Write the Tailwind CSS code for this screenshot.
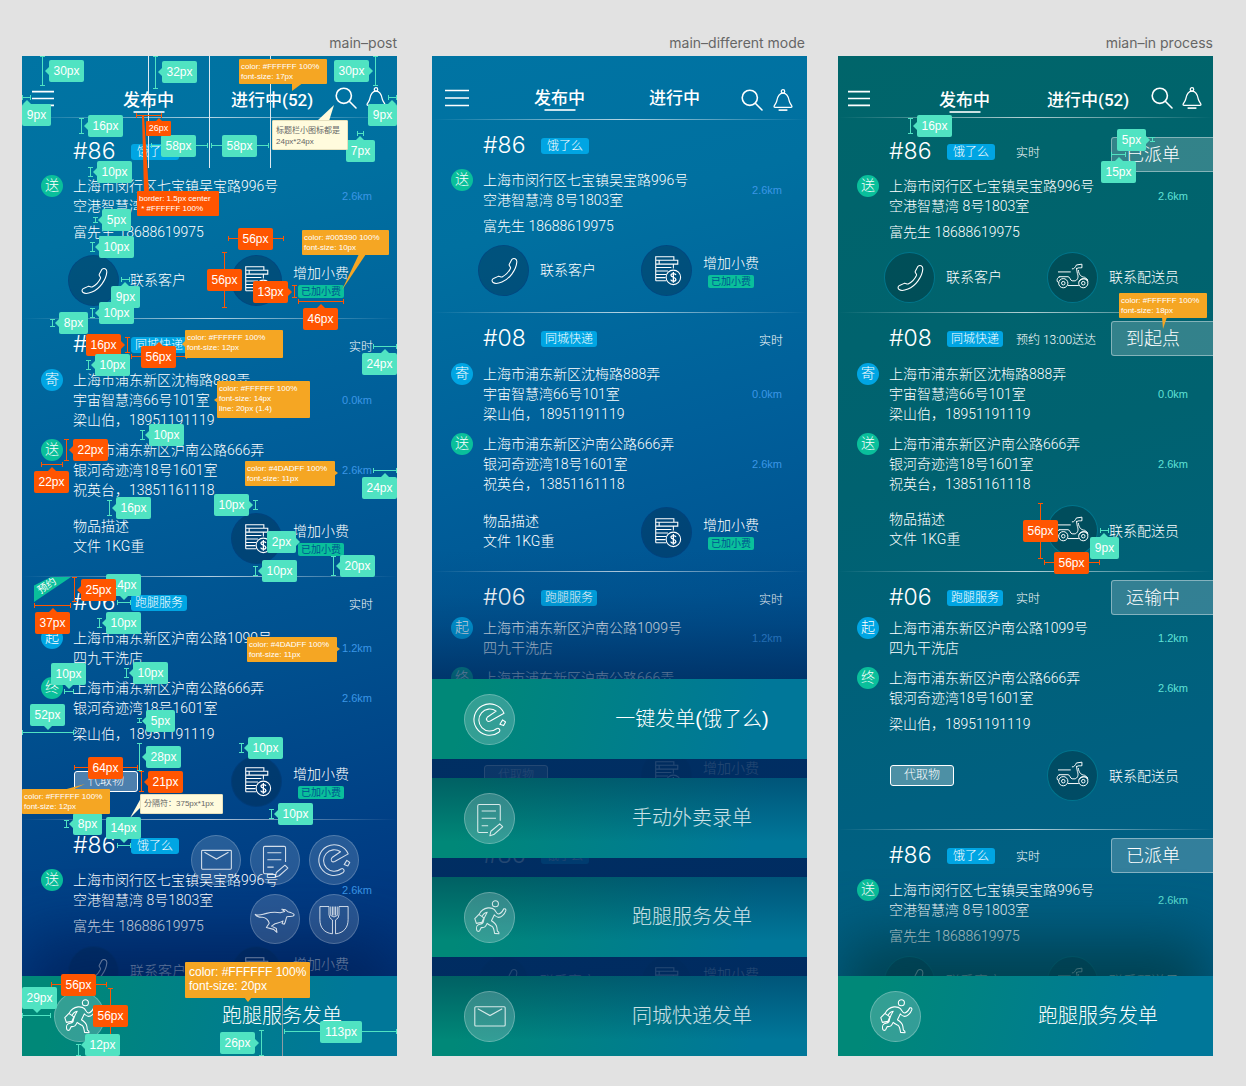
<!DOCTYPE html>
<html lang="zh-CN">
<head>
<meta charset="utf-8">
<meta name="viewport" content="width=device-width, initial-scale=1">
<title>Delivery app boards</title>
<script src="https://cdn.jsdelivr.net/npm/@tailwindcss/browser@4"></script>
</head>
<body class="bg-[#e2e2e2] font-['Liberation_Sans','Noto_Sans_CJK_SC',sans-serif] font-light text-white">

<!-- Shared line icons -->
<svg class="hidden">
  <symbol id="i-menu" viewBox="0 0 24 18"><path d="M0 1.5H24M0 9H24M0 16.5H24" stroke="currentColor" stroke-width="1.7"/></symbol>
  <symbol id="i-search" viewBox="0 0 22 22"><g fill="none" stroke="currentColor" stroke-width="1.6" stroke-linecap="round"><circle cx="8.8" cy="8.8" r="7.6"/><path d="M14.3 14.3L21 21"/></g></symbol>
  <symbol id="i-bell" viewBox="0 0 20 22"><g fill="none" stroke="currentColor" stroke-width="1.3"><circle cx="10" cy="2.4" r="1.7"/><path d="M10 4.1C14.6 4.1 15.6 8 16.3 12.2C16.7 14.4 18.6 16 18.9 17.4Q19 18.4 18 18.4H2Q1 18.4 1.1 17.4C1.4 16 3.3 14.4 3.7 12.2C4.4 8 5.4 4.1 10 4.1Z"/><path d="M5.6 21.1H14.4" stroke-width="1.6"/></g></symbol>
  <symbol id="i-phone" viewBox="0 0 50 50"><path fill="none" stroke="currentColor" stroke-width="1.1" stroke-linejoin="round" d="M33.6 13.6C35.5 11.8 38.8 12.8 38.6 16.2C38 24.4 31.2 33.6 23.4 36.8C19.6 38.3 16.2 38.6 14.4 37.3C12.8 36 13 33.8 14.8 33.1L19.6 31C21.4 30.4 22 32 23.6 31.6C27 30 30.4 26.4 32.2 22.6C32.5 21 30.4 20.6 30.8 18.8Z"/></symbol>
  <symbol id="i-coins" viewBox="0 0 50 50"><g fill="none" stroke="currentColor" stroke-width="1.1"><path d="M14 11H32.5V14.5H14ZM17.5 14.5H36.5V18.5H17.5ZM14 14.5V35.5M14 18.5H32V23M14 22H30M14 25.5H26.5M14 29H24.5M14 32.3H24M14 35.5H25M14 18.5H18"/><circle cx="32" cy="32" r="7.4"/><path d="M34.6 29.6C34 27.6 29.6 27.6 29.6 29.9C29.6 32.4 34.6 31.4 34.6 34.2C34.6 36.6 29.8 36.5 29.3 34.3M32 26.6V37.4" stroke-width="1.3"/></g></symbol>
  <symbol id="i-scooter" viewBox="0 0 50 50"><g fill="none" stroke="currentColor" stroke-width="1"><circle cx="15.6" cy="30.8" r="4.7"/><circle cx="15.6" cy="30.8" r="1.8"/><circle cx="36" cy="30.8" r="4.7"/><circle cx="36" cy="30.8" r="1.8"/><path d="M10.2 19.3H23.2M11 24.2H20.4C22.6 24.2 22.4 28 24.6 28.4H27.4C30 28 31.6 24.6 30 21L29 15.2M20.4 33.2H31.4M10.8 30.5C8 28.6 9.4 24.6 12 24.4M31 17.4C31.4 22.2 33.6 24.2 37.4 24.8L40.4 27.2C38 25.8 33.6 26 31.8 29.2M24.4 16.2C26.4 16.8 28.2 14 29 12.2L34.6 11.4V15C32.6 15.4 31.2 14.6 29.6 15.8M39.4 26.6L41 29"/></g></symbol>
  <symbol id="i-doc" viewBox="0 0 50 50"><path fill="none" stroke="currentColor" stroke-width="1.1" stroke-linejoin="round" d="M23.4 39.3H14.4Q13 39.3 13 37.8V12.2Q13 10.8 14.4 10.8H34.6Q36 10.8 36 12.2V27.2M17 17.4H31.6M17 24.8H31.6M17 32.4H23.6M25.4 42.6L26.4 38L35.4 30.4L38.4 33.4L29.4 41.4Z"/></symbol>
  <symbol id="i-ele" viewBox="0 0 50 50"><path fill="none" stroke="currentColor" stroke-width="1.1" stroke-linejoin="round" d="M39.8 18.6A16 16 0 1 0 34.6 38Q36.6 35.8 34.4 34.2Q33.4 33.6 32.2 34.4A11.2 11.2 0 1 1 31.8 16.4L23 22.4Q21.2 24.2 22.4 26Q23.6 27.6 25.8 26.6ZM38.4 25.4L41.4 27.6L39.4 31.2L35.6 29.8Z"/></symbol>
  <symbol id="i-run" viewBox="0 0 50 50"><g fill="none" stroke="currentColor" stroke-width="1.1" stroke-linejoin="round"><circle cx="31" cy="11" r="3.1"/><path d="M14.4 21.8C16 18.4 19.4 15.8 23.4 15.2C26 15 28.6 15.4 30 17C31.6 19 32.4 21.4 34 21.5C36 21.4 38.2 18.8 39.6 16.2Q41.9 15.6 41.7 18C40.4 22 36.6 25.2 33.6 24.8C31.6 24.3 30.6 23 30 22.3L27 28.4C29.6 30 32 32 32.5 35L33 38.8Q35.2 40 34.6 41.6L30.2 41.2C29.6 37 29 35 27.5 34C25.5 33 23.7 32.2 22.6 31C21 34.6 20 35.6 16.6 35.3L14.9 38.6Q13 39.9 12 38C11.4 35.8 12 33 13.6 32.4C16 31.6 17 32 18.4 30.2C19 26 20.6 23 22.6 19.7C20 20 18.6 21.6 17.2 24.2M10 26.2L14.2 21.8L19.2 25.4L17.2 30L11.6 31Z"/></g></symbol>
  <symbol id="i-mail" viewBox="0 0 50 50"><g fill="none" stroke="currentColor" stroke-width="1.1"><rect x="10" y="15" width="31" height="19.7" rx="1"/><path d="M13 17L25.5 24L38 17"/></g></symbol>
  <symbol id="i-roo" viewBox="0 0 50 50"><path fill="none" stroke="currentColor" stroke-width="1.1" stroke-linejoin="round" d="M4.4 20.2C9 22 12 20 15 19.4C20 18 26 17.4 30.4 18.6L35 17.2L32 14.8L36 15.4L38.4 17.4C41 18 44.6 19 45 20.8C44.4 23.4 39.6 22 37.4 22.6C36 25 36.4 28 34.6 30.4L32.4 29.6L33.4 27C31.6 28.4 28 29 25 30L21.4 32.4L26.4 34.8L27 39L23.6 35.8L16 33.8L19 29.4C18 26 15 23.6 12 23.2C8.8 23.4 6 22.6 4.4 20.2Z"/></symbol>
  <symbol id="i-fork" viewBox="0 0 50 50"><path fill="none" stroke="currentColor" stroke-width="1" stroke-linejoin="round" d="M10.3 12H19.8V20.6Q20 24.6 23.4 26V40.4C14.6 39.6 10.3 33.6 10.3 25.6ZM39.7 12H30.2V20.6Q30 24.6 26.6 26V40.4C35.4 39.6 39.7 33.6 39.7 25.6ZM21.6 12V21.4M23.4 12V21.4M25 12V21.4M26.6 12V21.4M28.4 12V21.4M21.6 21.4Q25 24.4 28.4 21.4"/></symbol>
</svg>

<main class="flex h-screen min-h-[700px] pb-[30px] pl-[22px] pr-[33px]">
  <section class="flex min-w-[375px] flex-1 flex-col">
    <h2 class="h-14 shrink-0 pt-[30px] text-right font-[Inter] text-sm leading-[26px] font-normal text-[#666]">main–post</h2>
    <div id="post" class="relative flex min-h-0 flex-1 flex-col bg-linear-[165deg,#0074a3_0%,#0070a0_18%,#005f9a_40%,#004f8e_62%,#003a82_84%,#002c70_100%]"></div>
  </section>
  <section class="ml-[35px] flex min-w-[375px] flex-1 flex-col">
    <h2 class="h-14 shrink-0 pt-[30px] pr-[2px] text-right font-[Inter] text-sm leading-[26px] font-normal text-[#666]">main–different mode</h2>
    <div id="mode" class="relative flex min-h-0 flex-1 flex-col bg-linear-[165deg,#0074a3_0%,#0070a0_18%,#005f9a_40%,#004f8e_62%,#003a82_84%,#002c70_100%]"></div>
  </section>
  <section class="ml-[31px] flex min-w-[375px] flex-1 flex-col">
    <h2 class="h-14 shrink-0 pt-[30px] text-right font-[Inter] text-sm leading-[26px] font-normal text-[#666]">mian–in process</h2>
    <div id="process" class="relative flex min-h-0 flex-1 flex-col bg-linear-[165deg,#00656a_0%,#006270_40%,#006080_70%,#005f8a_100%]"></div>
  </section>
</main>

<script>
const icon = (id, cls) => `<svg class="${cls}" aria-hidden="true"><use href="#i-${id}"/></svg>`;
const line = '<div class="h-px shrink-0 bg-linear-to-r from-white/0 via-white/70 to-white/0"></div>';

// Header bar of a phone
const tab = (text, on, cls) => `<button class="relative font-[Roboto,'Noto_Sans_CJK_SC',sans-serif] text-[17px] leading-6 font-medium whitespace-nowrap ${cls}">${text}${on ? '<span class="absolute top-[23px] left-1/2 h-[2px] w-[31px] -translate-x-1/2 bg-white/80"></span>' : ''}</button>`;
const header = count => `<header class="flex h-[61px] shrink-0 items-center pt-[27px] pr-[11px] pl-[10px]">
  <button aria-label="menu" class="-mt-1">${icon('menu', 'h-[17px] w-[22px]')}</button>
  ${tab('发布中', true, 'ml-[69px]')}${tab('进行中(' + count + ')', false, 'ml-[57px]')}
  <button aria-label="search" class="-mt-1 ml-auto">${icon('search', 'size-[22px]')}</button>
  <button aria-label="notice" class="-mt-1 ml-[9px]">${icon('bell', 'h-[22px] w-5')}</button></header>${line}`;
const wideHeader = `<header class="flex h-[63px] shrink-0 items-center pt-[20px] pr-[14px] pl-[13px]">
  <button aria-label="menu">${icon('menu', 'h-[18px] w-6')}</button>
  ${tab('发布中', true, 'ml-[65px]')}${tab('进行中', false, 'ml-16')}
  <button aria-label="search" class="ml-auto pt-1">${icon('search', 'size-[22px]')}</button>
  <button aria-label="notice" class="ml-[10px] pt-1">${icon('bell', 'h-[22px] w-5')}</button></header>${line}`;

// Order cards
const actions = {
  call: ['phone', '<span>联系客户</span>'],
  fee: ['coins', '<span class="flex flex-col"><span>增加小费</span><span class="mt-[2px] ml-[5px] h-[13px] w-[46px] rounded-[2px] bg-[#0abf9b] text-center text-[10px] leading-[13px] font-normal text-[#005390]">已加小费</span></span>'],
  rider: ['scooter', '<span>联系配送员</span>'],
};
const action = (name, ring) => `<button class="flex items-center gap-[11px] text-left text-sm leading-5 whitespace-nowrap">
  <span class="size-[51px] shrink-0 rounded-full border ${ring}">${icon(actions[name][0], 'size-full')}</span>${actions[name][1]}</button>`;
const stop = s => `<div class="flex pr-[25px] pl-[19px] text-sm leading-5">
  <span class="size-[22px] shrink-0 -mt-px rounded-full text-center leading-[21px] ${s[0] === '送' || s[0] === '终' ? 'bg-[#0abf9b]' : 'bg-[#00a5e3]'}">${s[0]}</span>
  <p class="ml-[10px] flex-1 whitespace-nowrap">${s[1]}</p><span class="self-center font-['Liberation_Sans',sans-serif] text-[11px] ${s[3]}">${s[2]}</span></div>`;
const order = (o, ring, km) => `<article class="shrink-0 font-[Roboto,'Noto_Sans_CJK_SC',sans-serif]">
  <div class="flex items-start pt-[9px] pl-[51px] ${o.head}">
    <h3 class="w-[58px] font-[Inter] text-[23px] leading-8 font-light">${o.no}</h3>
    <div class="w-[69px] pt-[9px]"><span class="block h-4 rounded-[3px] bg-[#00a5e3] text-center text-xs leading-4 ${o.tag.length > 3 ? 'w-14' : 'w-12'}">${o.tag}</span></div>
    ${o.status ? `<span class="pt-[10px] text-xs leading-4 whitespace-nowrap">${o.when}</span><span class="ml-auto h-[35px] w-[102px] rounded-l-[3px] border border-r-0 border-white/40 bg-white/20 pl-[14px] text-lg leading-[33px] ${o.shift || '-mt-px'}">${o.status}</span>`
      : `<span class="ml-auto pt-[11px] pr-6 text-xs leading-4">${o.when || ''}</span>`}
  </div>
  <div class="flex flex-col gap-[10px]">${o.stops.map(s => stop([...s, km])).join('')}</div>
  ${o.person ? `<p class="mt-[6px] pl-[51px] text-sm leading-5">${o.person}</p>` : ''}
  <div class="grid grid-cols-2 items-center pr-[3px] pl-[46px] ${o.foot}">
    ${o.left === 'call' ? action('call', ring) : o.left}${action(o.right, ring)}</div></article>`;

const notes = '<p class="pb-1 pl-[5px] text-sm leading-5">物品描述<br>文件 1KG重</p>';
const pickup = '<span class="ml-[6px] h-[21px] w-16 rounded-[3px] border border-white bg-white/30 text-center text-xs leading-[19px]">代取物</span>';
const list = (right, h, when, status, ring, km) => {
  const s = i => status ? status[i] : '';
  return [
    {no: '#86', tag: '饿了么', when: when[0], status: s(0), shift: 'mt-[2px]', head: 'h-[50px]', stops: [['送', '上海市闵行区七宝镇吴宝路996号<br>空港智慧湾 8号1803室', '2.6km']], person: '富先生 18688619975', left: 'call', right, foot: h[0]},
    {no: '#08', tag: '同城快递', when: when[1], status: s(1), head: 'h-[51px]', stops: [['寄', '上海市浦东新区沈梅路888弄<br>宇宙智慧湾66号101室<br>梁山伯，18951191119', '0.0km'], ['送', '上海市浦东新区沪南公路666弄<br>银河奇迹湾18号1601室<br>祝英台，13851161118', '2.6km']], left: notes, right, foot: h[1]},
    {no: '#06', tag: '跑腿服务', when: when[2], status: s(2), head: h[2], stops: [['起', '上海市浦东新区沪南公路1099号<br>四九干洗店', '1.2km'], ['终', '上海市浦东新区沪南公路666弄<br>银河奇迹湾18号1601室', '2.6km']], person: '梁山伯，18951191119', left: pickup, right, foot: h[3]},
    {no: '#86', tag: '饿了么', when: when[0], status: s(0), head: 'h-[50px]', stops: [['送', '上海市闵行区七宝镇吴宝路996号<br>空港智慧湾 8号1803室', '2.6km']], person: '富先生 18688619975', left: 'call', right, foot: 'h-[70px]'},
  ].map(o => order(o, ring, km)).join(line);
};
const bar = (id, text, cls) => `<button class="flex h-20 w-full shrink-0 items-center pl-[32px] text-xl ${cls}">
  <span class="size-[51px] shrink-0 rounded-full border border-white/25 bg-white/20">${icon(id, 'size-full')}</span>
  <span class="ml-[62px] flex-1 text-center">${text}</span></button>`;
const plainBar = 'bg-linear-[105deg,#008878_10%,#007799_85%]';
const shadeBar = 'bg-[linear-gradient(to_bottom,rgba(0,20,60,.34),rgba(0,20,60,0)_80%),linear-gradient(105deg,#008878_10%,#007799_85%)] text-white/80';

// Spec marks. Directions: l r u d point from the chip to the measured span.
const colours = {g: '#50e3c2', r: '#ff5500', o: '#f5a623', c: '#fffbdd', w: '#dfe9f0', k: '#8f9ba3'};
const marks = m => {
  let svg = '', html = '';
  for (const [c, x1, y1, x2, y2] of m.spans) {
    const v = x1 === x2, e = 2.5;
    svg += `<path stroke="${colours[c]}" fill="none" d="M${x1} ${y1}L${x2} ${y2}${c === 'w' || c === 'k' ? '' : v ? `M${x1 - e} ${y1}h5M${x1 - e} ${y2}h5` : `M${x1} ${y1 - e}v5M${x2} ${y1 - e}v5`}"/>`;
  }
  for (const [c, pts] of m.tips) svg += `<polygon fill="${colours[c]}" points="${pts}"/>`;
  for (const [c, x, y, text, dir, at] of m.chips) {
    const w = text.length > 4 ? 42 : text.length > 3 ? 35 : 29, h = 22;
    if (dir) {
      const p = {l: [x, y + 11, x - 4, y + 11], r: [x + w, y + 11, x + w + 4, y + 11], u: [at, y, at, y - 4], d: [at, y + h, at, y + h + 4]}[dir];
      svg += `<polygon fill="${colours[c]}" points="${dir === 'l' || dir === 'r' ? `${p[0]},${p[1] - 4} ${p[2]},${p[3]} ${p[0]},${p[1] + 4}` : `${p[0] - 4},${p[1]} ${p[2]},${p[3]} ${p[0] + 4},${p[1]}`}"/>`;
    }
    html += `<span class="absolute flex h-[22px] items-center justify-center rounded-[2px] text-xs ${c === 'g' ? 'bg-[#50e3c2]' : 'bg-[#ff5500]'}" style="left:${x}px;top:${y}px;width:${w}px">${text}</span>`;
  }
  for (const [cls, x, y, w, h, text] of m.notes)
    html += `<p class="absolute rounded-[1px] whitespace-nowrap ${cls}" style="left:${x}px;top:${y}px;width:${w}px;height:${h}px">${text}</p>`;
  return `<div class="pointer-events-none absolute inset-0"><svg class="absolute inset-0 size-full overflow-visible">${svg}</svg>${html}</div>`;
};
const amber = 'bg-[#f5a623] pt-[3px] pl-[2px] text-[8px] leading-[10px]';

const postMarks = marks({
  spans: [['w',126.5,0,126.5,112],['w',187.5,0,187.5,112],['w',248.5,0,248.5,112],['k',260.5,920,260.5,1000],
    ['g',20.5,0.5,20.5,29.5],['g',133.5,0.5,133.5,32.5],['g',353.5,0.5,353.5,29.5],['g',.5,41.5,8.5,41.5],['g',366.5,41.5,374.5,41.5],
    ['g',59.5,62.5,59.5,77.5],['r',114.5,59.5,139.5,59.5],['g',129.5,89.5,185.5,89.5],['g',189.5,89.5,246.5,89.5],['g',335.5,77.5,341.5,77.5],['g',68.5,111.5,68.5,120.5],
    ['g',73.5,161.5,73.5,166.5],['g',70.5,186.5,70.5,195.5],['r',206.5,182.5,261.5,182.5],['r',202.5,196.5,202.5,251.5],['r',272.5,229.5,272.5,241.5],['r',276.5,245.5,321.5,245.5],
    ['g',99.5,223.5,107.5,223.5],['g',70.5,252.5,70.5,261.5],['g',30.5,263.5,30.5,270.5],['r',105.5,281.5,105.5,296.5],['r',109.5,300.5,164.5,300.5],['g',66.5,304.5,66.5,313.5],['g',351.5,290.5,374.5,290.5],
    ['g',120.5,374.5,120.5,383.5],['r',44.5,383.5,44.5,404.5],['r',19.5,408.5,40.5,408.5],['g',351.5,414.5,374.5,414.5],['g',87.5,444.5,87.5,459.5],['g',233.5,444.5,233.5,453.5],
    ['g',233.5,510.5,233.5,519.5],['g',311.5,500.5,311.5,519.5],['g',95.5,546.5,108.5,546.5],['r',52.5,521.5,52.5,545.5],['r',12.5,549.5,48.5,549.5],['g',77.5,562.5,77.5,571.5],['g',42.5,635.5,51.5,635.5],['g',104.5,612.5,104.5,621.5],
    ['g',.5,676.5,51.5,676.5],['g',117.5,662.5,117.5,666.5],['g',117.5,687.5,117.5,714.5],['g',219.5,687.5,219.5,696.5],['r',52.5,711.5,115.5,711.5],['r',119.5,715.5,119.5,735.5],['g',44.5,764.5,44.5,771.5],['g',95.5,789.5,108.5,789.5],['g',249.5,753.5,249.5,762.5],
    ['r',29.5,928.5,84.5,928.5],['g',.5,959.5,28.5,959.5],['r',88.5,932.5,88.5,987.5],['g',56.5,988.5,56.5,999.5],['g',239.5,974.5,239.5,999.5],['g',262.5,975.5,374.5,975.5]],
  tips: [['o','270,26 282,26 270,35'],['c','295,65 307,65 312,49'],['r','120,60 122,60 127,136 122,136'],['r','133,66 137,62 141,66'],['o','337,198 344,198 320,234'],['o','164,284 160,288 164,292'],
    ['o','196,341 192,344 196,347'],['o','312,414 316,417 312,420'],['o','314,590 318,593 314,596'],['o','41,734 50,734 63,728'],['c','119,742 119,751 108,762'],['o','222,941 226,946 230,941']],
  chips: [['g',27,4,'30px','l'],['g',140,5,'32px','l'],['g',312,4,'30px','r'],['g',0,48,'9px','u',5],['g',346,48,'9px','u',370],['g',66,59,'16px','l'],['g',139,79,'58px'],['g',200,79,'58px'],['g',324,84,'7px','u',338],
    ['g',75,105,'10px','l'],['g',80,153,'5px','l'],['g',77,180,'10px','l'],['r',216,172,'56px'],['r',185,213,'56px'],['r',231,225,'13px','r'],['r',281,252,'46px','u',299],['g',77,246,'10px','l'],['g',89,230,'9px','u',103],['g',37,256,'8px','l'],
    ['r',64,278,'16px','r'],['r',119,290,'56px','u',137],['g',73,298,'10px','l'],['g',340,297,'24px','u',363],['g',127,368,'10px','l'],['r',51,383,'22px','l'],['r',12,415,'22px','u',30],['g',340,421,'24px','u',363],
    ['g',94,441,'16px','l'],['g',192,438,'10px','r'],['g',245,475,'2px','r'],['g',240,504,'10px','l'],['g',318,499,'20px','l'],['g',84,518,'14px','d',102],['r',59,523,'25px','l'],['r',13,556,'37px','u',31],['g',84,556,'10px','l'],
    ['g',29,607,'10px','d',47],['g',111,606,'10px','l'],['g',8,648,'52px','d',26],['g',124,654,'5px','l'],['g',124,690,'28px','l'],['g',226,681,'10px','l'],['r',66,701,'64px'],['r',126,715,'21px','l'],['g',51,757,'8px','l'],['g',84,761,'14px','d',102],['g',256,747,'10px','l'],
    ['r',39,918,'56px'],['g',0,931,'29px','d',15],['r',71,949,'56px'],['g',63,978,'12px','l'],['g',198,976,'26px','r'],['g',298,965,'113px']],
  notes: [[amber,217,3,88,25,'color: #FFFFFF 100%<br>font-size: 17px'],
    ['bg-[#ff5500] text-center text-[9px] leading-[15px]',124,65,25,15,'26px'],
    ['border border-[#e6e0bd] bg-[#fffbdd] pt-[4px] pl-[3px] text-[8px] leading-[11px] font-normal text-[#666]',250,64,76,30,'标题栏小图标都是<br>24px*24px'],
    ['bg-[#ff5500] pt-[3px] pl-[2px] text-[8px] leading-[10px]',115,135,82,25,'border: 1.5px center<br>&nbsp;* #FFFFFF 100%'],
    [amber,280,174,87,25,'color: #005390 100%<br>font-size: 10px'],[amber,163,274,98,28,'color: #FFFFFF 100%<br>font-size: 12px'],
    [amber,195,325,93,37,'color: #FFFFFF 100%<br>font-size: 14px<br>line: 20px (1.4)'],[amber,223,405,90,25,'color: #4DADFF 100%<br>font-size: 11px'],
    [amber,225,581,90,25,'color: #4DADFF 100%<br>font-size: 11px'],[amber,0,733,88,25,'color: #FFFFFF 100%<br>font-size: 12px'],
    ['border border-[#e6e0bd] bg-[#fffbdd] pl-[3px] text-[8px] leading-[18px] font-normal text-[#666]',118,738,83,20,'分隔符：375px*1px'],
    ['bg-[#f5a623] pt-[3px] pl-1 text-xs leading-[14px]',163,906,125,36,'color: #FFFFFF 100%<br>font-size: 20px']],
});
const processMarks = marks({
  spans: [['g',72.5,62.5,72.5,77.5],['g',314.5,81.5,314.5,85.5],['g',273.5,98.5,287.5,98.5],['r',202.5,447.5,202.5,502.5],['r',206.5,506.5,261.5,506.5],['g',262.5,474.5,270.5,474.5]],
  tips: [['o','324,261 329,261 325,273']],
  chips: [['g',79,59,'16px','l'],['g',279,73,'5px','r'],['g',263,105,'15px','u',281],['r',185,464,'56px'],['r',216,496,'56px'],['g',252,481,'9px','u',266]],
  notes: [[amber,281,237,88,25,'color: #FFFFFF 100%<br>font-size: 18px']],
});

const blueRing = 'border-[#003f85]/50 bg-[#002848]/40', tealRing = 'border-[#007f99]/80 bg-[#002830]/35';
const blueKm = 'text-[#3b96e6]', mintKm = 'text-[#5fe0d6]';

// Round shortcuts floating over the first board
const shortcut = id => `<button aria-label="${id}" class="size-[50px] rounded-full border border-white/20 bg-white/15">${icon(id, 'size-full')}</button>`;
const shortcuts = `<div class="absolute top-[779px] right-[38px] flex flex-col items-end gap-[9px] text-white/80">
  <div class="flex gap-[9px]">${shortcut('mail')}${shortcut('doc')}${shortcut('ele')}</div>
  <div class="flex gap-[9px]">${shortcut('roo')}${shortcut('fork')}</div></div>`;
const ribbon = `<div class="absolute top-[521px] left-3 h-[25px] w-[37px]">
  <div class="size-full bg-[#0abf9b] [clip-path:polygon(0_34%,46%_0,100%_0,0_100%)]"></div>
  <span class="absolute top-[3px] left-[3px] -rotate-[34deg] text-[10px] leading-3 font-normal whitespace-nowrap">预约</span></div>`;

document.getElementById('post').innerHTML = header(52) +
  `<div class="flex min-h-0 flex-1 flex-col overflow-hidden pt-2">${list('fee', ['h-[76px]', 'h-[76px]', 'h-[51px]', 'h-[75px]'], ['', '实时', '实时'], null, blueRing, blueKm)}</div>
  <div class="relative shrink-0"><div class="absolute inset-x-0 bottom-0 h-[220px] overflow-hidden"><div class="absolute inset-x-10 bottom-0 h-20 shadow-[0_0_60px_36px_rgba(0,34,90,.8)]"></div></div>
  <div class="relative">${bar('run', '跑腿服务发单', plainBar)}</div></div>` + shortcuts + ribbon + postMarks;

document.getElementById('mode').innerHTML = wideHeader +
  `<div class="flex min-h-0 flex-1 flex-col overflow-hidden">${list('fee', ['h-[76px] pb-2', 'h-[77px]', 'h-[46px]', 'h-[95px] pb-3'], ['', '实时', '实时'], null, blueRing, blueKm)}</div>
  <div class="absolute inset-x-0 bottom-0 flex flex-col gap-[19px] bg-linear-[180deg,rgba(0,42,92,0)_0%,rgba(0,42,92,.08)_9%,rgba(0,42,92,.25)_15%,rgba(0,42,92,.42)_19%,rgba(0,42,92,.68)_25%,rgba(0,42,92,.86)_42%,rgba(0,42,92,.86)_100%] pt-[130px]">
  ${bar('ele', '一键发单(饿了么)', plainBar)}${bar('doc', '手动外卖录单', shadeBar)}${bar('run', '跑腿服务发单', shadeBar)}${bar('mail', '同城快递发单', shadeBar)}</div>`;

document.getElementById('process').innerHTML = header(52) +
  `<div class="flex min-h-0 flex-1 flex-col overflow-hidden pt-2">${list('rider', ['h-[70px]', 'h-[77px] pb-1', 'h-[46px]', 'h-[95px] pb-3'], ['实时', '预约 13:00送达', '实时'], ['已派单', '到起点', '运输中'], tealRing, mintKm)}</div>
  <div class="relative shrink-0"><div class="absolute inset-x-0 bottom-0 h-[220px] overflow-hidden"><div class="absolute inset-x-10 bottom-0 h-20 shadow-[0_0_60px_36px_rgba(0,62,74,.88)]"></div></div>
  <div class="relative">${bar('run', '跑腿服务发单', plainBar)}</div></div>` + processMarks;
</script>
</body>
</html>
